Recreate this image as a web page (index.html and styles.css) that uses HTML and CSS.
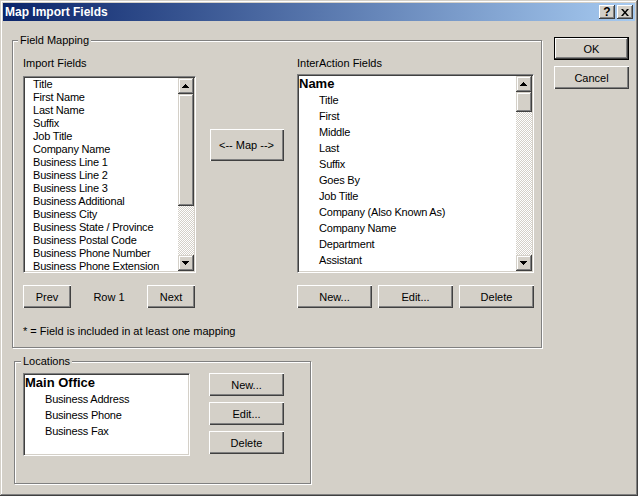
FILE: index.html
```html
<!DOCTYPE html>
<html lang="en">
<head>
    <meta charset="UTF-8">
    <title>Map Import Fields</title>
    <link rel="stylesheet" href="styles.css">
</head>
<body>
    <div class="window">
        <div class="titlebar">
            <span class="title">Map Import Fields</span>
            <div class="caption-btns">
                <span class="cbtn help">?</span>
                <span class="cbtn">
                    <svg width="8" height="7" viewBox="0 0 8 7"><path d="M0 0h2l2 2.5L6 0h2L5 3.5 8 7H6L4 4.5 2 7H0l3-3.5z"/></svg>
                </span>
            </div>
        </div>

        <div class="client">
            <div class="main">
                <div class="group mapping">
                    <div class="group-title">Field Mapping</div>
                    <div class="mapping-grid">
                        <div class="lbl">Import Fields</div>
                        <div></div>
                        <div class="lbl">InterAction Fields</div>

                        <div class="listbox import">
                            <div class="items">
                                <div class="item">Title</div>
                                <div class="item">First Name</div>
                                <div class="item">Last Name</div>
                                <div class="item">Suffix</div>
                                <div class="item">Job Title</div>
                                <div class="item">Company Name</div>
                                <div class="item">Business Line 1</div>
                                <div class="item">Business Line 2</div>
                                <div class="item">Business Line 3</div>
                                <div class="item">Business Additional</div>
                                <div class="item">Business City</div>
                                <div class="item">Business State / Province</div>
                                <div class="item">Business Postal Code</div>
                                <div class="item">Business Phone Number</div>
                                <div class="item">Business Phone Extension</div>
                            </div>
                            <div class="scrollbar">
                                <div class="sbtn"><svg width="7" height="4" viewBox="0 0 7 4"><path d="M3 0h1v1h1v1h1v1h1v1H0V3h1V2h1V1h1z"/></svg></div>
                                <div class="thumb thumb-import"></div>
                                <div class="track"></div>
                                <div class="sbtn"><svg width="7" height="4" viewBox="0 0 7 4"><path d="M0 0h7v1H6v1H5v1H4v1H3V3H2V2H1V1H0z"/></svg></div>
                            </div>
                        </div>

                        <div class="map-cell">
                            <button class="btn map">&lt;-- Map --&gt;</button>
                        </div>

                        <div class="listbox interaction">
                            <div class="items">
                                <div class="head">Name</div>
                                <div class="sub">Title</div>
                                <div class="sub">First</div>
                                <div class="sub">Middle</div>
                                <div class="sub">Last</div>
                                <div class="sub">Suffix</div>
                                <div class="sub">Goes By</div>
                                <div class="sub">Job Title</div>
                                <div class="sub">Company (Also Known As)</div>
                                <div class="sub">Company Name</div>
                                <div class="sub">Department</div>
                                <div class="sub">Assistant</div>
                                <div class="head">Business Address</div>
                            </div>
                            <div class="scrollbar">
                                <div class="sbtn"><svg width="7" height="4" viewBox="0 0 7 4"><path d="M3 0h1v1h1v1h1v1h1v1H0V3h1V2h1V1h1z"/></svg></div>
                                <div class="thumb thumb-small"></div>
                                <div class="track"></div>
                                <div class="sbtn"><svg width="7" height="4" viewBox="0 0 7 4"><path d="M0 0h7v1H6v1H5v1H4v1H3V3H2V2H1V1H0z"/></svg></div>
                            </div>
                        </div>

                        <div class="pager">
                            <button class="btn small">Prev</button>
                            <span class="row-no">Row 1</span>
                            <button class="btn small">Next</button>
                        </div>
                        <div></div>
                        <div class="btn-row">
                            <button class="btn">New...</button>
                            <button class="btn">Edit...</button>
                            <button class="btn">Delete</button>
                        </div>

                        <div class="note">* = Field is included in at least one mapping</div>
                    </div>
                </div>

                <div class="group locations">
                    <div class="group-title">Locations</div>
                    <div class="loc-body">
                        <div class="listbox loc-list">
                            <div class="items">
                                <div class="head">Main Office</div>
                                <div class="sub">Business Address</div>
                                <div class="sub">Business Phone</div>
                                <div class="sub">Business Fax</div>
                            </div>
                        </div>
                        <div class="loc-btns">
                            <button class="btn">New...</button>
                            <button class="btn">Edit...</button>
                            <button class="btn">Delete</button>
                        </div>
                    </div>
                </div>
            </div>

            <div class="side">
                <button class="btn default">OK</button>
                <button class="btn">Cancel</button>
            </div>
        </div>
    </div>
</body>
</html>
```

FILE: styles.css
```css
body {
    margin: 0;
    font-family: "Liberation Sans", Arial, sans-serif;
    font-size: 11px;
    color: #000;
    background: #d4d0c8;
}
.window {
    box-sizing: border-box;
    width: 638px;
    height: 496px;
    padding: 3px;
    background: #d4d0c8;
    box-shadow: inset -1px -1px #404040, inset 1px 1px #d4d0c8, inset -2px -2px #808080, inset 2px 2px #fff;
    overflow: hidden;
}

/* title bar */
.titlebar {
    height: 18px;
    display: flex;
    align-items: center;
    justify-content: space-between;
    padding-left: 2px;
    background: linear-gradient(to right, #0a246a, #a6caf0);
}
.title {
    color: #fff;
    font-weight: bold;
    font-size: 12px;
    line-height: 18px;
}
.caption-btns {
    display: flex;
    gap: 2px;
    margin-right: 2px;
}
.cbtn {
    width: 16px;
    height: 14px;
    display: flex;
    align-items: center;
    justify-content: center;
    background: #d4d0c8;
    box-shadow: inset -1px -1px #404040, inset 1px 1px #fff, inset -2px -2px #808080;
}
.cbtn.help {
    font-weight: bold;
    font-size: 12px;
    line-height: 14px;
}

/* client area */
.client {
    display: flex;
    align-items: flex-start;
    padding-left: 9px;
}
.side {
    display: flex;
    flex-direction: column;
    gap: 6px;
    margin: 16px 0 0 12px;
}

/* buttons */
.btn {
    width: 75px;
    height: 23px;
    padding: 0;
    border: none;
    background: #d4d0c8;
    font-family: inherit;
    font-size: 11px;
    color: #000;
    box-shadow: inset 1px 1px #fff, inset -1px -1px #404040, inset -2px -2px #808080;
}
.btn.default {
    box-shadow: inset 0 0 0 1px #000, inset -2px -2px #404040, inset 2px 2px #fff, inset -3px -3px #808080;
}
.btn.small {
    width: 48px;
}
.btn.map {
    width: 74px;
    height: 32px;
}

/* group boxes */
.group {
    box-sizing: border-box;
    border: 1px solid #808080;
    box-shadow: inset 1px 1px #fff, 1px 1px #fff;
}
.group-title {
    display: table;
    padding: 0 2px;
    line-height: 13px;
    background: #d4d0c8;
}
.mapping {
    width: 530px;
    margin-top: 19px;
    padding-bottom: 9px;
}
.mapping .group-title {
    margin: -7px 0 0 5px;
}
.mapping-grid {
    display: grid;
    grid-template-columns: 174px 100px 237px;
    margin: 10px 0 0 10px;
    align-items: start;
}
.lbl {
    line-height: 13px;
}
.map-cell {
    display: flex;
    justify-content: center;
    padding: 53px 1px 0 0;
    margin-top: 6px;
}
.pager {
    width: 172px;
    display: flex;
    justify-content: space-between;
    align-items: center;
    margin-top: 12px;
}
.row-no {
    padding-top: 1px;
}
.btn-row {
    display: flex;
    gap: 6px;
    margin-top: 12px;
}
.note {
    grid-column: 1 / 4;
    line-height: 13px;
    margin-top: 17px;
}

/* list boxes */
.listbox {
    box-sizing: border-box;
    display: flex;
    background: #fff;
    border: 1px solid;
    border-color: #808080 #fff #fff #808080;
    box-shadow: inset 1px 1px #404040, inset -1px -1px #d4d0c8;
    padding: 1px;
    overflow: hidden;
}
.items {
    flex: 1;
    overflow: hidden;
    letter-spacing: -0.2px;
}
.import {
    width: 173px;
    height: 197px;
    margin-top: 6px;
}
.import .items {
    padding-left: 8px;
}
.item {
    line-height: 13px;
    white-space: nowrap;
}
.interaction {
    width: 237px;
    height: 199px;
    margin-top: 4px;
}
.head {
    font-weight: bold;
    font-size: 13px;
    line-height: 16px;
    letter-spacing: 0;
    white-space: nowrap;
}
.sub {
    line-height: 16px;
    padding-left: 20px;
    white-space: nowrap;
}

/* scroll bars */
.scrollbar {
    width: 16px;
    display: flex;
    flex-direction: column;
}
.sbtn, .thumb {
    box-sizing: border-box;
    background: #d4d0c8;
    box-shadow: inset -1px -1px #404040, inset 1px 1px #d4d0c8, inset -2px -2px #808080, inset 2px 2px #fff;
}
.sbtn {
    height: 16px;
    display: flex;
    align-items: center;
    justify-content: center;
}
.sbtn svg {
    margin: 0 1px 1px 0;
}
.thumb-import {
    height: 112px;
}
.thumb-small {
    height: 20px;
}
.track {
    flex: 1;
    background: repeating-conic-gradient(#d4d0c8 0 25%, #fff 0 50%) 0 0 / 2px 2px;
}

/* locations */
.locations {
    width: 297px;
    margin: 13px 0 0 2px;
    padding-bottom: 27px;
}
.locations .group-title {
    margin: -7px 0 0 6px;
}
.loc-body {
    display: flex;
    gap: 19px;
    margin: 5px 0 0 8px;
}
.loc-list {
    width: 167px;
    height: 83px;
}
.loc-list .items {
    letter-spacing: 0;
}
.loc-list .sub {
    letter-spacing: -0.2px;
}
.loc-btns {
    display: flex;
    flex-direction: column;
    gap: 6px;
}
```
